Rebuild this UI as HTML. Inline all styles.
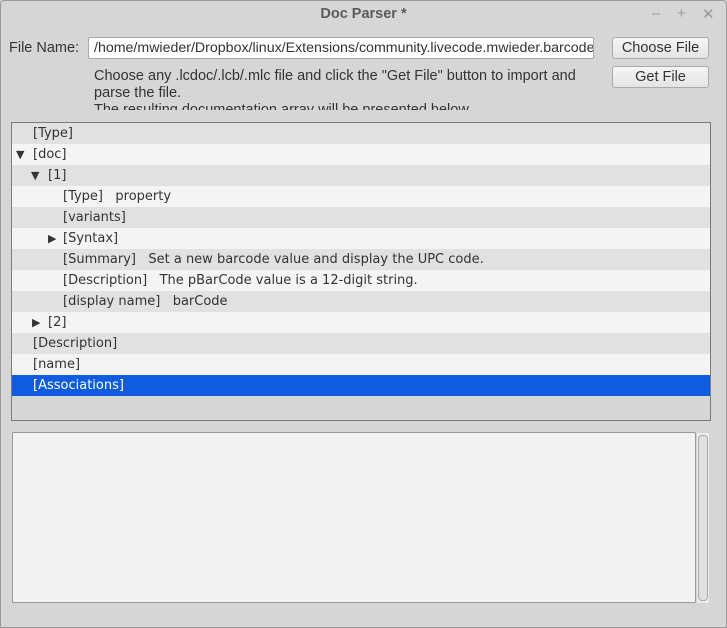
<!DOCTYPE html>
<html><head><style>
body{margin:0;width:727px;height:628px;background:#d6d6d6;font-family:"Liberation Sans",sans-serif;position:relative;overflow:hidden;color:#333}
.win{position:absolute;left:0;top:0;width:725px;height:626px;border:1px solid #9a9a9a;border-radius:4px 4px 0 0}
.title{position:absolute;top:6px;left:0;width:727px;text-align:center;font-size:14.5px;font-weight:bold;color:#5a5a5a}
.ctl{position:absolute;top:5px;font-size:15px;color:#999}
.lbl{position:absolute;font-size:14.5px;color:#333}
.field{position:absolute;left:88px;top:37px;height:22px;background:#fff;border:1px solid #aaa;border-radius:2px;font-size:14.2px;line-height:21px;padding-left:5px;overflow:hidden;white-space:nowrap;box-sizing:border-box;width:506px}
.btn{position:absolute;left:612px;width:97px;height:22px;border:1px solid #aaa;border-radius:3px;background:linear-gradient(#f6f6f6,#e4e4e4);font-size:14.5px;text-align:center;line-height:21px;box-sizing:border-box;color:#333}
.list{position:absolute;left:11px;top:122px;width:700px;height:299px;border:1px solid #7a7a7a;box-sizing:border-box;background:#d6d6d6;overflow:hidden}
.row{height:21px;line-height:22px;font-family:"DejaVu Sans",sans-serif;font-size:13px;color:#333;white-space:pre;position:relative}
.row span.t{position:absolute;top:0}
.a{background:#e1e1e1}.b{background:#f4f4f4}
.sel{background:#0f5ce0;color:#fff}
.tri{position:absolute;font-size:11px;top:0}
.l0{left:21px}.l1{left:36px}.l2{left:51px}
.area{position:absolute;left:12px;top:432px;width:684px;height:171px;background:#f3f3f3;border:1px solid #999;border-radius:2px;box-sizing:border-box}
.sb{position:absolute;left:697px;top:433px;width:12px;height:170px;background:#ebebeb}
.sb div{position:absolute;left:1px;top:2px;width:8px;height:164px;border:1px solid #aaa;border-radius:4px;background:#e0e0e0}
</style></head><body>
<div class="win"></div>
<div class="title">Doc Parser *</div>
<div class="ctl" style="left:652px">–</div><div class="ctl" style="left:677px">+</div><div class="ctl" style="left:702px">✕</div>
<div class="lbl" style="left:9px;top:40px">File Name:</div>
<div class="field">/home/mwieder/Dropbox/linux/Extensions/community.livecode.mwieder.barcode</div>
<div class="btn" style="top:37px">Choose File</div>
<div class="btn" style="top:66px">Get File</div>
<div style="position:absolute;left:94px;top:68px;width:500px;height:42px;overflow:hidden;font-size:14.5px;line-height:17px;color:#333">Choose any .lcdoc/.lcb/.mlc file and click the "Get File" button to import and parse the file.<br>The resulting documentation array will be presented below.</div>
<div class="list">
<div class="row a"><span class="t l0">[Type]</span></div>
<div class="row b"><span class="tri" style="left:4px">▼</span><span class="t l0">[doc]</span></div>
<div class="row a"><span class="tri" style="left:19px">▼</span><span class="t l1">[1]</span></div>
<div class="row b"><span class="t l2">[Type]   property</span></div>
<div class="row a"><span class="t l2">[variants]</span></div>
<div class="row b"><span class="tri" style="left:36px">▶</span><span class="t l2">[Syntax]</span></div>
<div class="row a"><span class="t l2">[Summary]   Set a new barcode value and display the UPC code.</span></div>
<div class="row b"><span class="t l2">[Description]   The pBarCode value is a 12-digit string.</span></div>
<div class="row a"><span class="t l2">[display name]   barCode</span></div>
<div class="row b"><span class="tri" style="left:20px">▶</span><span class="t l1">[2]</span></div>
<div class="row a"><span class="t l0">[Description]</span></div>
<div class="row b"><span class="t l0">[name]</span></div>
<div class="row sel"><span class="t l0">[Associations]</span></div>
</div>
<div class="area"></div>
<div class="sb"><div></div></div>
</body></html>
